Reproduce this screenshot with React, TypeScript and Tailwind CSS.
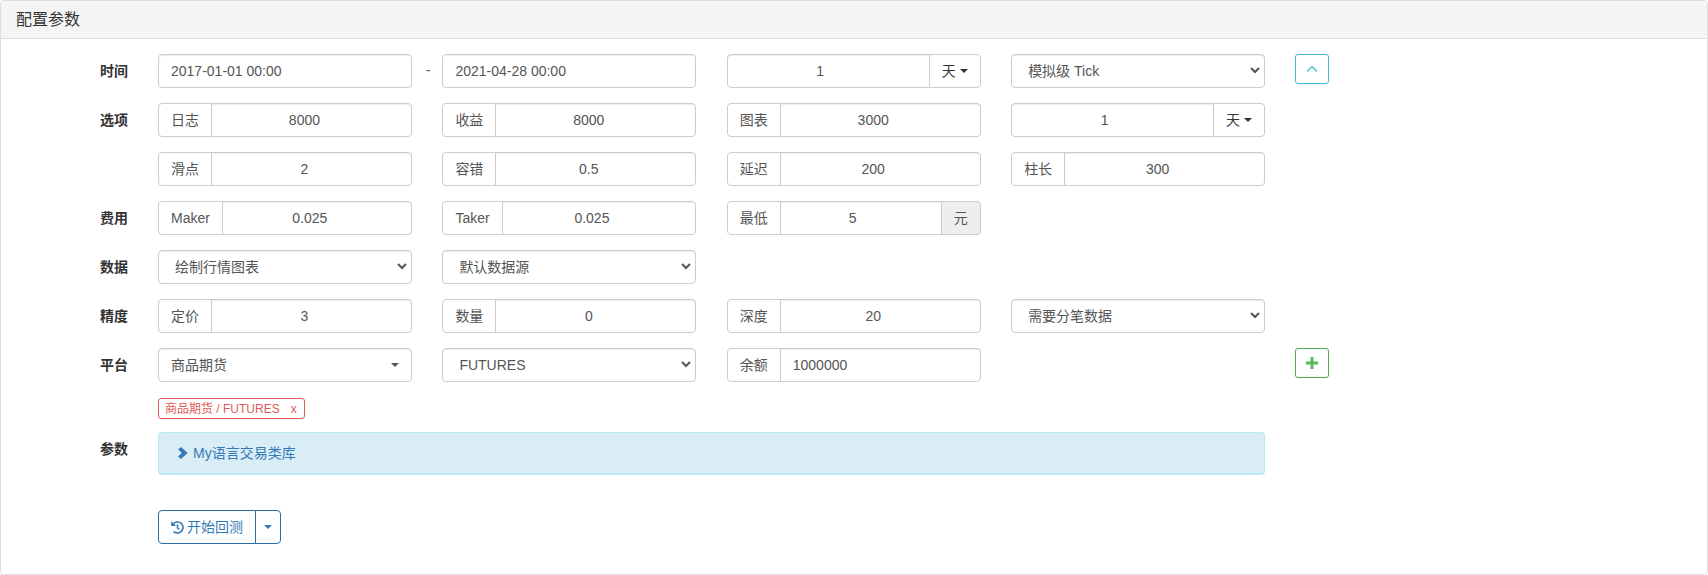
import React from "react";
import { FaHistory } from "react-icons/fa";

const FONT = '[font-family:"Liberation_Sans","Noto_Sans_CJK_SC",sans-serif]';
const box = "h-[34px] border border-[#ccc] bg-white text-[14px] text-[#555] shadow-[inset_0_1px_1px_rgba(0,0,0,0.075)]";

function Caret({ className = "" }: { className?: string }) {
  return <span className={`inline-block border-x-[4px] border-t-[4px] border-x-transparent border-t-current ${className}`} />;
}

function Group({ label, value }: { label: string; value: string }) {
  return (
    <div className="flex h-[34px] w-full">
      <span className="flex h-[34px] shrink-0 items-center rounded-l-[4px] border border-[#ccc] bg-white px-[12px] text-[14px] text-[#555]">{label}</span>
      <input readOnly value={value} className={`${box} -ml-px min-w-0 flex-1 rounded-r-[4px] pr-[26px] pl-[12px] text-center outline-none`} />
    </div>
  );
}

function Text({ value }: { value: string }) {
  return <input readOnly value={value} className={`${box} w-full rounded-[4px] px-[12px] outline-none`} />;
}

function Unit({ value }: { value: string }) {
  return (
    <div className="flex h-[34px] w-full">
      <input readOnly value={value} className={`${box} min-w-0 flex-1 rounded-l-[4px] pr-[28px] pl-[12px] text-center outline-none`} />
      <span className="-ml-px flex h-[34px] w-[52px] shrink-0 items-center justify-center gap-[4px] rounded-r-[4px] border border-[#ccc] bg-white text-[14px] text-[#333]">
        天<Caret />
      </span>
    </div>
  );
}

function Select({ options }: { options: string[] }) {
  return (
    <div className="relative w-full">
      <select defaultValue={options[0]} className={`${box} w-full appearance-none rounded-[4px] pr-[24px] pl-[16px] outline-none`}>
        {options.map((o) => (
          <option key={o}>{o}</option>
        ))}
      </select>
      <svg className="pointer-events-none absolute top-[13px] right-[5px]" width="10" height="7" viewBox="0 0 10 7" fill="none" stroke="#555" strokeWidth="2">
        <path d="M1 1 L5 5 L9 1" />
      </svg>
    </div>
  );
}

function Row({ label, children, extra, className = "mb-[15px]" }: { label?: string; children?: React.ReactNode; extra?: React.ReactNode; className?: string }) {
  return (
    <div className={`flex ${className}`}>
      <div className="w-[157px] shrink-0 pl-[99px] pt-[7px] text-[14px] leading-[20px] font-bold text-[#333]">{label}</div>
      <div className="grid w-[1107px] shrink-0 grid-cols-4 gap-x-[30.5px]">{children}</div>
      <div className="ml-[30px]">{extra}</div>
    </div>
  );
}

export default function App() {
  return (
    <div className={`h-[575px] w-[1708px] bg-white ${FONT}`}>
      <div className="h-[575px] overflow-hidden rounded-[4px] border border-[#ddd]">
        <div className="flex h-[38px] items-center border-b border-[#ddd] bg-[#f5f5f5] px-[15px] pt-px text-[16px] text-[#333]">配置参数</div>
        <div className="pt-[15px]">
          <Row
            label="时间"
            extra={
              <button className="flex h-[30px] w-[34px] items-center justify-center rounded-[3px] border border-[#46b8da] bg-white text-[#5bc0de]">
                <svg width="12" height="8" viewBox="0 0 12 8" fill="none" stroke="currentColor" strokeWidth="1.5"><path d="M1 6.5 L6 1.5 L11 6.5" /></svg>
              </button>
            }
          >
            <div className="relative">
              <Text value="2017-01-01 00:00" />
              <span className="absolute top-[6px] left-[268px] text-[14px] text-[#555]">-</span>
            </div>
            <Text value="2021-04-28 00:00" />
            <Unit value="1" />
            <Select options={["模拟级 Tick", "实盘级 Tick"]} />
          </Row>
          <Row label="选项">
            <Group label="日志" value="8000" />
            <Group label="收益" value="8000" />
            <Group label="图表" value="3000" />
            <Unit value="1" />
          </Row>
          <Row>
            <Group label="滑点" value="2" />
            <Group label="容错" value="0.5" />
            <Group label="延迟" value="200" />
            <Group label="柱长" value="300" />
          </Row>
          <Row label="费用">
            <Group label="Maker" value="0.025" />
            <Group label="Taker" value="0.025" />
            <div className="flex h-[34px]">
              <span className="flex h-[34px] shrink-0 items-center rounded-l-[4px] border border-[#ccc] bg-white px-[12px] text-[14px] text-[#555]">最低</span>
              <input readOnly value="5" className={`${box} -ml-px min-w-0 flex-1 pr-[28px] pl-[12px] text-center outline-none`} />
              <span className="-ml-px flex h-[34px] w-[40px] shrink-0 items-center justify-center rounded-r-[4px] border border-[#ccc] bg-[#eee] text-[14px] text-[#555]">元</span>
            </div>
          </Row>
          <Row label="数据">
            <Select options={["绘制行情图表"]} />
            <Select options={["默认数据源"]} />
          </Row>
          <Row label="精度">
            <Group label="定价" value="3" />
            <Group label="数量" value="0" />
            <Group label="深度" value="20" />
            <Select options={["需要分笔数据"]} />
          </Row>
          <Row
            label="平台"
            className="mb-[16px]"
            extra={
              <button className="flex h-[30px] w-[34px] items-center justify-center rounded-[3px] border border-[#4cae4c] bg-white">
                <svg width="12" height="12" viewBox="0 0 12 12" fill="#5cb85c"><path d="M4.5 0h3v4.5H12v3H7.5V12h-3V7.5H0v-3h4.5z" /></svg>
              </button>
            }
          >
            <div className={`${box} flex w-full items-center justify-between rounded-[4px] pr-[12px] pl-[12px] text-[#333]`}>
              商品期货<Caret />
            </div>
            <Select options={["FUTURES"]} />
            <div className="flex h-[34px]">
              <span className="flex h-[34px] shrink-0 items-center rounded-l-[4px] border border-[#ccc] bg-white px-[12px] text-[14px] text-[#555]">余额</span>
              <input readOnly value="1000000" className={`${box} -ml-px min-w-0 flex-1 rounded-r-[4px] px-[12px] outline-none`} />
            </div>
          </Row>
          <div className="mb-[13px] flex pl-[157px]">
            <span className="flex h-[21px] w-[147px] items-center rounded-[3px] border border-[#e05a5a] pl-[6px] text-[12px] text-[#e05a5a]">
              商品期货 / FUTURES<span className="ml-[11px]">x</span>
            </span>
          </div>
          <div className="mb-[35px] flex">
            <div className="w-[157px] shrink-0 pl-[99px] pt-[7px] text-[14px] leading-[20px] font-bold text-[#333]">参数</div>
            <div className="flex h-[43px] w-[1107px] items-center gap-[5px] rounded-[4px] border border-[#bce8f1] border-b-[2px] bg-[#d9edf7] pl-[19px] text-[14px] text-[#337ab7]">
              <svg width="10" height="12" viewBox="0 0 9 11" fill="currentColor"><path d="M2.6 0 L8.8 5.5 L2.6 11 L0 8.6 L3.4 5.5 L0 2.4 Z" /></svg>
              <span>My语言交易类库</span>
            </div>
          </div>
          <div className="flex pl-[157px]">
            <button className="flex h-[34px] w-[98px] items-center justify-center gap-[3px] rounded-l-[4px] border border-[#2e6da4] bg-white text-[14px] text-[#337ab7]">
              <FaHistory className="text-[13px]" />
              开始回测
            </button>
            <button className="-ml-px flex h-[34px] w-[26px] items-center justify-center rounded-r-[4px] border border-[#2e6da4] bg-white text-[#337ab7]">
              <Caret />
            </button>
          </div>
        </div>
      </div>
    </div>
  );
}
